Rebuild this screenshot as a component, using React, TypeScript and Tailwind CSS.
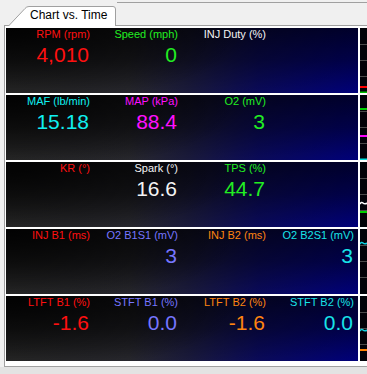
import React from 'react';

type Gauge = { label: string; value: string; color: string };

const RED = '#ff1010';
const GREEN = '#22ee22';
const WHITE = '#f4f4f4';
const CYAN = '#10f0f0';
const MAGENTA = '#ff10ff';
const BLUE = '#7676ff';
const ORANGE = '#ff8410';
const AQUA = '#18e4e8';

const rows: Gauge[][] = [
  [
    { label: 'RPM (rpm)', value: '4,010', color: RED },
    { label: 'Speed (mph)', value: '0', color: GREEN },
    { label: 'INJ Duty (%)', value: '', color: WHITE },
    { label: '', value: '', color: WHITE },
  ],
  [
    { label: 'MAF (lb/min)', value: '15.18', color: CYAN },
    { label: 'MAP (kPa)', value: '88.4', color: MAGENTA },
    { label: 'O2 (mV)', value: '3', color: GREEN },
    { label: '', value: '', color: WHITE },
  ],
  [
    { label: 'KR (°)', value: '', color: RED },
    { label: 'Spark (°)', value: '16.6', color: WHITE },
    { label: 'TPS (%)', value: '44.7', color: GREEN },
    { label: '', value: '', color: WHITE },
  ],
  [
    { label: 'INJ B1 (ms)', value: '', color: RED },
    { label: 'O2 B1S1 (mV)', value: '3', color: BLUE },
    { label: 'INJ B2 (ms)', value: '', color: ORANGE },
    { label: 'O2 B2S1 (mV)', value: '3', color: AQUA },
  ],
  [
    { label: 'LTFT B1 (%)', value: '-1.6', color: RED },
    { label: 'STFT B1 (%)', value: '0.0', color: BLUE },
    { label: 'LTFT B2 (%)', value: '-1.6', color: ORANGE },
    { label: 'STFT B2 (%)', value: '0.0', color: AQUA },
  ],
];

// little bits of the trace lines that peek out on the right
const traces: { y: number; color: string; wave?: boolean }[][] = [
  [
    { y: 59, color: '#ff0000' },
    { y: 64.5, color: '#00c000' },
  ],
  [
    { y: 14, color: '#00d000' },
    { y: 41, color: '#ff00ff' },
    { y: 64.5, color: '#00e0e0' },
  ],
  [
    { y: 41, color: '#ffffff', wave: true },
    { y: 50, color: '#00d000' },
  ],
  [{ y: 14, color: '#10d0e0', wave: true }],
  [
    { y: 34, color: '#10d0e0', wave: true },
    { y: 54, color: '#ff8000' },
  ],
];

function Strip({ lines }: { lines: { y: number; color: string; wave?: boolean }[] }) {
  return (
    <svg width="12" height="65" className="block bg-[#020208]">
      {[16.5, 32.5, 48.5].map((y) => (
        <line key={y} x1="0" x2="12" y1={y} y2={y} stroke="#4a4a4a" strokeWidth="1" />
      ))}
      {lines.map((l, i) =>
        l.wave ? (
          <path
            key={i}
            d={`M0 ${l.y + 1} Q1.5 ${l.y - 1.5} 3 ${l.y} T8 ${l.y}`}
            stroke={l.color}
            strokeWidth="1.6"
            fill="none"
          />
        ) : (
          <line key={i} x1="0" x2="12" y1={l.y} y2={l.y} stroke={l.color} strokeWidth="2" />
        )
      )}
    </svg>
  );
}

function Panel({ gauges }: { gauges: Gauge[] }) {
  return (
    <div className="w-[352px] h-[65px] flex-none grid grid-cols-4 [background-image:radial-gradient(ellipse_70%_120%_at_0%_0%,rgba(0,0,0,0.9),rgba(0,0,0,0)_100%),linear-gradient(to_bottom,rgba(0,0,0,0.65),rgba(0,0,0,0.4)_50%,rgba(0,0,0,0)),linear-gradient(to_right,#2c2c2c,#28282e_35%,#1a1a3c_52%,#0a0a5a_72%,#00007a)]">
      {gauges.map((g, i) => (
        <div key={i} className="flex flex-col items-end">
          <span className="pr-[4px] text-[11px] leading-[13px] whitespace-nowrap" style={{ color: g.color }}>
            {g.label}
          </span>
          <span className="mt-[2px] pr-[5px] text-[21px] leading-[24px] whitespace-nowrap" style={{ color: g.color }}>
            {g.value}
          </span>
        </div>
      ))}
    </div>
  );
}

export default function App() {
  return (
    <div className="w-[367px] h-[374px] overflow-hidden bg-[#f0f0f0] flex flex-col font-['Liberation_Sans',Arial,sans-serif]">
      {/* Tab strip */}
      <div className="h-[25px] flex flex-none">
        <div className="w-[8px] flex-none" />
        <div className="relative z-10 mt-[6px] h-[20px] w-[109px] flex-none">
          <svg width="109" height="20" className="absolute inset-0">
            <path
              d="M0.5 20 L17 2.5 Q18.5 0.5 21 0.5 L105 0.5 Q107.5 0.5 107.5 3 L107.5 20"
              fill="#ffffff"
              stroke="#a0a0a0"
              strokeWidth="1"
            />
          </svg>
          <span className="relative block pl-[22px] pt-[2px] text-[12px] leading-[14px] text-black whitespace-nowrap">
            Chart vs. Time
          </span>
        </div>
        <div className="flex-1 mt-[2px] border-t border-[#a0a0a0]" />
      </div>

      {/* Gauge page */}
      <div className="ml-[4px] flex-none overflow-hidden bg-white border-l border-t border-b border-[#a0a0a0] pl-[1px] pt-[2px] pb-[5px]">
        <div className="flex flex-col gap-[2px]">
          {rows.map((r, i) => (
            <div key={i} className="flex gap-[2px]">
              <Panel gauges={r} />
              <Strip lines={traces[i]} />
            </div>
          ))}
        </div>
      </div>

      <div className="flex-1 bg-[#e3e3e3]" />
    </div>
  );
}
